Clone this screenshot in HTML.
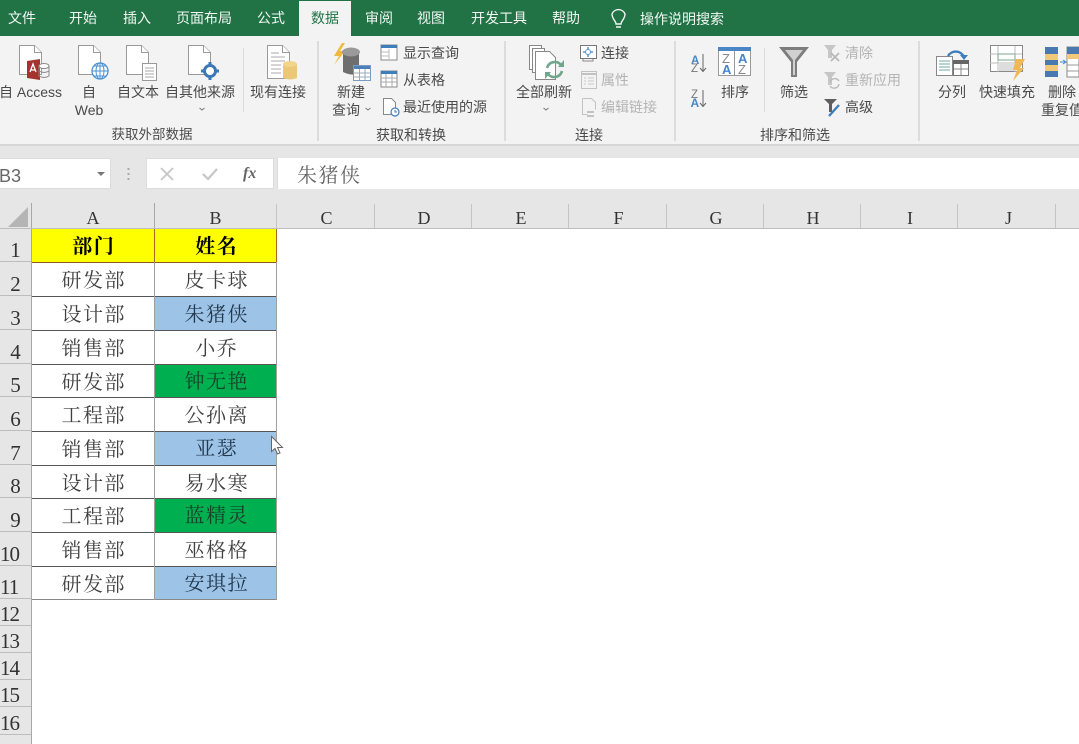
<!DOCTYPE html>
<html lang="zh"><head><meta charset="utf-8"><title>Excel</title>
<style>
html,body{margin:0;padding:0;background:#fff}
#p{position:relative;width:1079px;height:744px;overflow:hidden;background:#fff;font-family:"Liberation Sans","Noto Sans CJK SC",sans-serif;color:#444;filter:blur(.3px)}
#p div{position:absolute;white-space:nowrap}
.t{font-size:14px;line-height:18px;color:#4a4a4a}
.c{transform:translateX(-50%)}
.g{color:#b4b4b4}
.tab{top:9px;font-size:14px;line-height:18px;color:#f2f7f4}
.sep{width:2px;background:#dcdcdc}
.h{top:204px;height:24px;font:18px/28px "Liberation Serif",serif;color:#333;text-align:center;border-right:1px solid #c4c4c4;box-sizing:border-box;padding-left:2px}
.r{left:0;width:31px;text-align:center;font:21px/26px "Liberation Serif",serif;color:#333;background:#e6e6e6;border-bottom:1px solid #bdbdbd;box-sizing:border-box}
.cell{box-sizing:border-box;text-align:center;font-family:"Liberation Serif","Noto Serif CJK SC",serif;font-size:20px;letter-spacing:1.5px;color:#404040;height:34px;line-height:36px;padding-left:1.5px}
.bl{background:#9dc3e6;color:#22384f}
.gr{background:#00b050;color:#16402a}
</style></head><body><div id="p">
<div style="left:0;top:0;width:1079px;height:36px;background:#217346"></div>
<div style="left:0;top:36px;width:1079px;height:108px;background:#f3f3f3"></div>
<div style="left:0;top:144px;width:1079px;height:2px;background:#d6d6d6"></div>
<div style="left:0;top:146px;width:1079px;height:83px;background:#e6e6e6"></div>
<div style="left:299px;top:1px;width:52px;height:36px;background:#f3f3f3"></div>

<div class="tab" style="left:8px">文件</div><div class="tab" style="left:69px">开始</div><div class="tab" style="left:123px">插入</div><div class="tab" style="left:176px">页面布局</div><div class="tab" style="left:257px">公式</div><div class="tab" style="left:311px;color:#217346">数据</div><div class="tab" style="left:365px">审阅</div><div class="tab" style="left:417px">视图</div><div class="tab" style="left:471px">开发工具</div><div class="tab" style="left:552px">帮助</div><div class="tab" style="left:640px;top:10px">操作说明搜索</div>

<div class="sep" style="left:243px;top:48px;height:64px;width:1px"></div>
<div class="sep" style="left:317px;top:41px;height:100px"></div>
<div class="sep" style="left:504px;top:41px;height:100px"></div>
<div class="sep" style="left:674px;top:41px;height:100px"></div>
<div class="sep" style="left:764px;top:48px;height:64px;width:1px"></div>
<div class="sep" style="left:918px;top:41px;height:100px"></div>

<div class="t" style="left:-1px;top:83px">自 Access</div>
<div class="t c" style="left:89px;top:83px">自</div><div class="t c" style="left:89px;top:101px">Web</div>
<div class="t c" style="left:138px;top:83px">自文本</div>
<div class="t c" style="left:200px;top:83px">自其他来源</div>
<div class="t c" style="left:278px;top:83px">现有连接</div>
<div class="t c" style="left:152px;top:126px;font-size:13.5px">获取外部数据</div>
<div class="t c" style="left:351px;top:83px">新建</div><div class="t c" style="left:346px;top:101px">查询</div>
<div class="t" style="left:403px;top:44px">显示查询</div>
<div class="t" style="left:403px;top:71px">从表格</div>
<div class="t" style="left:403px;top:98px">最近使用的源</div>
<div class="t c" style="left:411px;top:126px">获取和转换</div>
<div class="t c" style="left:544px;top:83px">全部刷新</div>
<div class="t" style="left:601px;top:44px">连接</div>
<div class="t g" style="left:601px;top:71px">属性</div>
<div class="t g" style="left:601px;top:98px">编辑链接</div>
<div class="t c" style="left:589px;top:126px">连接</div>
<div class="t c" style="left:735px;top:83px">排序</div>
<div class="t c" style="left:794px;top:83px">筛选</div>
<div class="t g" style="left:845px;top:44px">清除</div>
<div class="t g" style="left:845px;top:71px">重新应用</div>
<div class="t" style="left:845px;top:98px">高级</div>
<div class="t c" style="left:795px;top:126px">排序和筛选</div>
<div class="t c" style="left:952px;top:83px">分列</div>
<div class="t c" style="left:1007px;top:83px">快速填充</div>
<div class="t c" style="left:1062px;top:83px">删除</div>
<div class="t" style="left:1041px;top:101px">重复值</div>

<div style="left:-2px;top:158px;width:113px;height:31px;background:#fff;border:1px solid #dcdcdc;box-sizing:border-box"></div>
<div style="left:-1px;top:164px;font-size:18px;line-height:24px;color:#666">B3</div>
<div style="left:146px;top:158px;width:128px;height:31px;background:#fff;border:1px solid #dcdcdc;box-sizing:border-box"></div>
<div style="left:277px;top:158px;width:802px;height:31px;background:#fff;border-left:1px solid #dcdcdc;box-sizing:border-box"></div>
<div style="left:297px;top:163px;font:20px/26px 'Liberation Serif','Noto Serif CJK SC',serif;letter-spacing:1.5px;color:#666">朱猪侠</div>
<div style="left:243px;top:163px;font:italic bold 16px/22px 'Liberation Serif',serif;color:#666">fx</div>

<div class="h" style="left:32px;width:123px;padding-left:0">A</div><div class="h" style="left:155px;width:122px;padding-left:0">B</div><div class="h" style="left:277px;width:98px">C</div><div class="h" style="left:375px;width:97px">D</div><div class="h" style="left:472px;width:97px">E</div><div class="h" style="left:569px;width:98px">F</div><div class="h" style="left:667px;width:97px">G</div><div class="h" style="left:764px;width:97px">H</div><div class="h" style="left:861px;width:97px">I</div><div class="h" style="left:958px;width:98px;padding-left:4px">J</div>
<div style="left:0;top:228px;width:1079px;height:1px;background:#bdbdbd"></div>
<div style="left:0;top:229px;width:32px;height:515px;background:#e6e6e6;border-right:1px solid #a8a8a8;box-sizing:border-box"></div>

<div class="r" style="top:229px;height:33px;line-height:43px">1</div><div class="r" style="top:262px;height:34px;line-height:44px">2</div><div class="r" style="top:296px;height:34px;line-height:44px">3</div><div class="r" style="top:330px;height:34px;line-height:44px">4</div><div class="r" style="top:364px;height:33px;line-height:43px">5</div><div class="r" style="top:397px;height:34px;line-height:44px">6</div><div class="r" style="top:431px;height:34px;line-height:44px">7</div><div class="r" style="top:465px;height:33px;line-height:43px">8</div><div class="r" style="top:498px;height:34px;line-height:44px">9</div><div class="r" style="top:532px;height:34px;line-height:44px;letter-spacing:-1px;text-align:left">10</div><div class="r" style="top:566px;height:33px;line-height:43px;letter-spacing:-1px;text-align:left">11</div><div class="r" style="top:599px;height:27px;line-height:31px;letter-spacing:-1px;text-align:left">12</div><div class="r" style="top:626px;height:27px;line-height:31px;letter-spacing:-1px;text-align:left">13</div><div class="r" style="top:653px;height:27px;line-height:31px;letter-spacing:-1px;text-align:left">14</div><div class="r" style="top:680px;height:27px;line-height:31px;letter-spacing:-1px;text-align:left">15</div><div class="r" style="top:707px;height:28px;line-height:32px;letter-spacing:-1px;text-align:left">16</div><div class="r" style="top:735px;height:27px"></div>

<div class="cell" style="left:32px;top:229px;width:122px;background:#ff0;color:#000;font-weight:700;line-height:37px;height:33px">部门</div><div class="cell" style="left:155px;top:229px;width:122px;background:#ff0;color:#000;font-weight:700;line-height:37px;height:33px">姓名</div>
<div class="cell" style="left:32px;top:263px;width:122px">研发部</div><div class="cell" style="left:155px;top:263px;width:122px">皮卡球</div>
<div class="cell" style="left:32px;top:297px;width:122px">设计部</div><div class="cell bl" style="left:155px;top:297px;width:122px;height:33px">朱猪侠</div>
<div class="cell" style="left:32px;top:331px;width:122px">销售部</div><div class="cell" style="left:155px;top:331px;width:122px">小乔</div>
<div class="cell" style="left:32px;top:365px;width:122px">研发部</div><div class="cell gr" style="left:155px;top:364px;width:122px;height:33px;line-height:37px">钟无艳</div>
<div class="cell" style="left:32px;top:398px;width:122px">工程部</div><div class="cell" style="left:155px;top:398px;width:122px">公孙离</div>
<div class="cell" style="left:32px;top:432px;width:122px">销售部</div><div class="cell bl" style="left:155px;top:431px;width:122px;height:34px;line-height:37px">亚瑟</div>
<div class="cell" style="left:32px;top:466px;width:122px">设计部</div><div class="cell" style="left:155px;top:466px;width:122px">易水寒</div>
<div class="cell" style="left:32px;top:499px;width:122px">工程部</div><div class="cell gr" style="left:155px;top:498px;width:122px;height:34px;line-height:37px">蓝精灵</div>
<div class="cell" style="left:32px;top:533px;width:122px">销售部</div><div class="cell" style="left:155px;top:533px;width:122px">巫格格</div>
<div class="cell" style="left:32px;top:567px;width:122px">研发部</div><div class="cell bl" style="left:155px;top:566px;width:122px;height:33px;line-height:37px">安琪拉</div>

<svg style="position:absolute;left:0;top:0" width="1079" height="744" viewBox="0 0 1079 744" fill="none">
<!-- grid -->
<g stroke="#555" stroke-width="1">
<path d="M32 262.500H277M32 296.500H277M32 330.500H277M32 364.500H277M32 397.500H277M32 431.500H277M32 465.500H277M32 498.500H277M32 532.500H277M32 566.500H277"/>
</g>
<path d="M32 262.500H277" stroke="#8a5a20"/>
<path d="M32 599.500H277" stroke="#888"/>
<path d="M154.500 229V600M276.500 229V600" stroke="#a0a0a0"/>
<path d="M154.500 229V262M276.500 229V262" stroke="#a86a20"/>
<path d="M8 227L28 207V227Z" fill="#b5b5b5"/>
<path d="M31.500 203V228M154.500 203V228" stroke="#a8a8a8"/>
<!-- tab bulb -->
<path d="M616 24c0-3-4-5-4-10a7 7 0 0 1 13 0c0 5-4 7-4 10zM616 27h5" stroke="#f2f7f4" stroke-width="1.400"/>
<!-- docs -->
<g fill="#fff" stroke="#9a9a9a">
<path d="M19.500 45.500h15l7 7v22h-22z"/><path d="M78.500 45.500h15l7 7v22h-22z"/><path d="M126.500 45.500h15l7 7v22h-22z"/><path d="M188.500 45.500h15l7 7v22h-22z"/><path d="M267.500 45.500h15l7 7v26h-22z"/>
<path d="M34.500 45.500v7h7M93.500 45.500v7h7M141.500 45.500v7h7M203.500 45.500v7h7M282.500 45.500v7h7"/>
</g>
<!-- access -->
<path d="M27 61l13-2v21l-13-2z" fill="#a4332e"/><path d="M30 72l3-8 3 8M31 70h4" stroke="#fff" stroke-width="1.300"/>
<ellipse cx="44" cy="66" rx="5" ry="2.500" fill="#fff" stroke="#888"/><path d="M39 66v10q5 3 10 0V66M39 71q5 3 10 0" stroke="#888"/>
<!-- globe -->
<circle cx="100" cy="71" r="8" fill="#fff" stroke="#4a90d0" stroke-width="1.300"/><path d="M92 71h16M100 63v16M94 66h12M94 76h12" stroke="#4a90d0"/><ellipse cx="100" cy="71" rx="4" ry="8" stroke="#4a90d0"/>
<!-- text doc -->
<rect x="142.500" y="63.500" width="14" height="17" fill="#fff" stroke="#999"/><path d="M145 68h9M145 71h9M145 74h9M145 77h9" stroke="#aaa"/>
<!-- other -->
<circle cx="210" cy="71" r="5.500" stroke="#3b78b5" stroke-width="3" fill="#fff"/><path d="M210 62v3M210 77v3M201 71h3M216 71h3" stroke="#3b78b5" stroke-width="3"/>
<path d="M199.500 108l2.500 2 2.500-2" stroke="#777"/>
<!-- existing -->
<path d="M271 53h8M271 57h14M271 61h14M271 65h10M271 69h10M271 73h10" stroke="#aaa"/>
<path d="M283 64v14q7 3 14 0V64z" fill="#eac878"/><ellipse cx="290" cy="64" rx="7" ry="3" fill="#f2d48c"/>
<!-- new query -->
<path d="M342 43l-8 13h5l-5 9 11-14h-5l5-8z" fill="#f0b93c"/>
<path d="M343 53v19q8 4 16 2V53z" fill="#6e6e6e"/><ellipse cx="351" cy="52" rx="9" ry="4.500" fill="#9a9a9a"/>
<rect x="353.500" y="65.500" width="17" height="15" fill="#fff" stroke="#7a9cc0"/><path d="M354 66h16v3h-16z" fill="#4a7fb8"/><path d="M354 73h16M354 77h16M359.500 69v11M365 69v11" stroke="#9ab"/>
<path d="M365.500 108l2.500 2 2.500-2" stroke="#777"/>
<!-- show query -->
<rect x="381" y="45" width="16" height="15" fill="#fff" stroke="#888"/><path d="M381 45h16v3h-16z" fill="#3f7ebc"/><path d="M389 49v10M381 52h8M381 56h8" stroke="#bbb"/>
<!-- from table -->
<rect x="381" y="71" width="16" height="16" fill="#fff" stroke="#888"/><path d="M381 71h16v3h-16z" fill="#3f7ebc"/><path d="M386 74v13M392 74v13M381 78h16M381 82h16" stroke="#aaa"/>
<!-- recent -->
<path d="M383.500 98.500h8l4 4v12h-12z" fill="#fff" stroke="#888"/><circle cx="395" cy="112" r="4" fill="#fff" stroke="#3f7ebc" stroke-width="1.200"/><path d="M395 110v2h2" stroke="#3f7ebc"/>
<!-- refresh all -->
<g fill="#fff" stroke="#888"><path d="M529.500 45.500h12v24h-12z"/><path d="M532.500 48.500h12v24h-12z"/><path d="M535.500 51.500h14l6 6v22h-20z"/></g>
<path d="M547 68a8 8 0 0 1 14-3M562 71a8 8 0 0 1-14 3" stroke="#6fa68c" stroke-width="2.600"/><path d="M564 60v7h-6z M545 79v-7h6z" fill="#6fa68c"/>
<path d="M543.500 108l2.500 2 2.500-2" stroke="#777"/>
<!-- connections -->
<rect x="580.500" y="45.500" width="16" height="13" fill="#fff" stroke="#777"/><path d="M588 47v10M583 52h10" stroke="#5a95d0" stroke-width="1.500"/><circle cx="588" cy="52" r="2.500" fill="#fff" stroke="#5a95d0"/><path d="M583 59v2h10v-2" stroke="#888"/>
<rect x="581.500" y="71.500" width="15" height="17" fill="#f3f3f3" stroke="#c2c2c2"/><path d="M581 73h16v2h-16z" fill="#c2c2c2"/><path d="M584 78h2M588 78h6M584 81h2M588 81h6M584 84h2M588 84h6" stroke="#c8c8c8"/>
<path d="M582.500 98.500h9l4 4v7M582.500 98.500v16h5" stroke="#c2c2c2"/><path d="M587 112h7M587 116h7" stroke="#c2c2c2" stroke-width="2"/>
<!-- sort -->
<text x="691" y="64" font-family="Liberation Sans,sans-serif" font-size="11.500" font-weight="700" fill="#4a85c5">A</text><text x="691" y="72" font-family="Liberation Sans,sans-serif" font-size="11.500" fill="#777">Z</text><path d="M703 54v17M700 68l3 3.500 3-3.500" stroke="#666"/>
<text x="691" y="98" font-family="Liberation Sans,sans-serif" font-size="11.500" fill="#777">Z</text><text x="690.500" y="107" font-family="Liberation Sans,sans-serif" font-size="12" font-weight="700" fill="#4a85c5">A</text><path d="M703 90v16M700 103l3 3.500 3-3.500" stroke="#666"/>
<rect x="718.500" y="47.500" width="32" height="28" fill="#fff" stroke="#999"/><path d="M718 47h33v4h-33z" fill="#4a85c5"/><path d="M734.500 51v25" stroke="#999"/>
<text x="722" y="63" font-family="Liberation Sans,sans-serif" font-size="13" fill="#888">Z</text><text x="722" y="74" font-family="Liberation Sans,sans-serif" font-size="13" font-weight="700" fill="#4a85c5">A</text><text x="738" y="63" font-family="Liberation Sans,sans-serif" font-size="13" font-weight="700" fill="#4a85c5">A</text><text x="738" y="74" font-family="Liberation Sans,sans-serif" font-size="13" fill="#888">Z</text>
<!-- filter -->
<path d="M779 47h30l-12 15v15h-6V62z" fill="#7d7d7d"/><path d="M785 50h18l-8 10v15h-2V60z" fill="#d0d0d0"/>
<path d="M824 45h12l-4 5v8h-4v-8z" fill="#c6c6c6"/><path d="M831 53l8 8M839 53l-8 8" stroke="#b8b8b8" stroke-width="1.800"/>
<path d="M824 72h12l-4 5v8h-4v-8z" fill="#c6c6c6"/><path d="M830 82a5 5 0 0 1 9-1M839 84a5 5 0 0 1-9 2" stroke="#bdbdbd" stroke-width="1.500"/>
<path d="M824 99h13l-5 5v8h-3v-8z" fill="#5e5e5e"/><path d="M829 116l10-11" stroke="#3f7ebc" stroke-width="2.400"/>
<!-- text to cols -->
<path d="M936.500 56.500h16v19h-16z" fill="#fff" stroke="#888"/><path d="M939 61h11M939 64h11M939 67h11M939 70h11" stroke="#6fa8a0"/>
<rect x="953.500" y="60.500" width="15" height="15" fill="#fff" stroke="#777"/><path d="M953 60h16v4h-16z" fill="#666"/><path d="M961 64v11M954 69h14" stroke="#888"/>
<path d="M948 56a9 9 0 0 1 16 1" stroke="#3f7ebc" stroke-width="2.400"/><path d="M960 55h8l-4 5z" fill="#3f7ebc"/>
<!-- flash fill -->
<rect x="990.500" y="45.500" width="32" height="26" fill="#fff" stroke="#888"/><path d="M990 54h32M990 63h32M998 46v26M1015 46v26" stroke="#bbb"/><rect x="998" y="54" width="17" height="6" fill="#fff" stroke="#7aa890"/><rect x="998" y="63" width="17" height="8" fill="#ddd"/>
<path d="M1016 59h9l-5 9h4l-11 13 4-11h-4z" fill="#eeb854"/>
<!-- remove dup -->
<rect x="1045" y="47" width="13" height="30" fill="#f0c878"/><path d="M1045 47h13v7h-13zM1045 60h13v5h-13zM1045 71h13v6h-13z" fill="#4a78b0"/>
<rect x="1067" y="47" width="12" height="30" fill="#fff" stroke="#888"/><path d="M1067 47h12v7h-12z" fill="#4a78b0"/><path d="M1067 54h12v5h-12z" fill="#f0c878"/><path d="M1067 65h12M1067 71h12" stroke="#999"/>
<path d="M1060 62h5M1063 60l3 2-3 2" stroke="#4a8ac5"/>
<!-- name box -->
<path d="M97 172h8l-4 4z" fill="#777"/>
<path d="M128.500 168v2M128.500 173v2M128.500 178v2" stroke="#aaa" stroke-width="2"/>
<path d="M161 168l12 12M173 168l-12 12" stroke="#c6c6c6" stroke-width="1.800"/>
<path d="M203 174l5 5 9-10" stroke="#c6c6c6" stroke-width="2.200"/>
<!-- cursor -->
<path d="M271.500 436.500v15l3.500-3 2.500 5.500 2.500-1-2.500-5.500h5z" fill="#fff" stroke="#666"/>
</svg>
</div></body></html>
